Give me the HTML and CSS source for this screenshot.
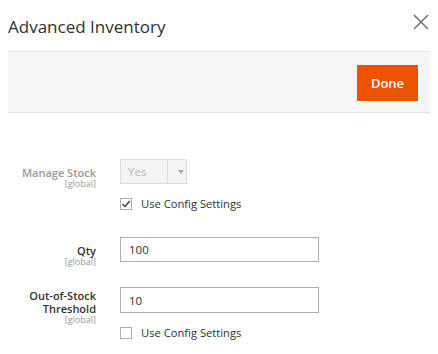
FILE: index.html
```html
<!DOCTYPE html>
<html>
<head>
  <meta charset="UTF-8">
  <title>Advanced Inventory</title>
  <link rel="stylesheet" href="styles.css">
</head>
<body>

  <div class="modal">
    <header class="modal-header">
      <h1 class="modal-title">Advanced Inventory</h1>
      <button class="close" type="button" aria-label="Close">
        <svg width="16" height="16" viewBox="0 0 16 16">
          <path d="M1 1 L15 15 M15 1 L1 15" stroke="#6f6f6f" stroke-width="1.5" fill="none"/>
        </svg>
      </button>
    </header>

    <div class="page-actions">
      <button class="btn-primary" type="button">Done</button>
    </div>

    <form class="inventory-form">
      <!-- Manage stock -->
      <div class="field disabled">
        <div class="label">
          <span class="label-text">Manage Stock</span>
          <span class="scope">[global]</span>
        </div>
        <div class="control">
          <div class="select">
            <span class="select-value">Yes</span>
            <span class="select-arrow"></span>
          </div>
          <label class="check">
            <span class="box checked">
              <svg width="10" height="10" viewBox="0 0 10 10">
                <path d="M1.5 5 L4 7.5 L8.8 2" stroke="#404040" stroke-width="1.4" fill="none"/>
              </svg>
            </span>
            Use Config Settings
          </label>
        </div>
      </div>

      <!-- Qty -->
      <div class="field">
        <div class="label">
          <span class="label-text">Qty</span>
          <span class="scope">[global]</span>
        </div>
        <div class="control">
          <input class="text-input" type="text" value="100">
        </div>
      </div>

      <!-- Out-of-stock threshold -->
      <div class="field">
        <div class="label two-line">
          <span class="label-text">Out-of-Stock<br>Threshold</span>
          <span class="scope">[global]</span>
        </div>
        <div class="control">
          <input class="text-input tall" type="text" value="10">
          <label class="check">
            <span class="box"></span>
            Use Config Settings
          </label>
        </div>
      </div>
    </form>
  </div>

</body>
</html>
```

FILE: styles.css
```css
body {
  margin: 0;
  font-family: "Open Sans", Arial, sans-serif;
  color: #303030;
  background-color: #fff;
}

.modal {
  padding: 0 8px;
}

.modal-header {
  height: 51px;
  display: flex;
  align-items: center;
  justify-content: space-between;
}

.modal-title {
  margin: 0;
  font-size: 17px;
  font-weight: 400;
  color: #303030;
  padding-top: 2px;
}

.close {
  align-self: flex-start;
  background: none;
  border: none;
  padding: 0;
  margin-right: 1px;
  margin-top: 14px;
  width: 16px;
  height: 16px;
  cursor: pointer;
}

.page-actions {
  background-color: #f6f6f6;
  border-top: 1px solid #e3e3e3;
  border-bottom: 1px solid #e3e3e3;
  height: 60px;
  display: flex;
  align-items: center;
  justify-content: flex-end;
  padding-right: 12px;
}

.btn-primary {
  background-color: #eb5202;
  color: #fff;
  border: none;
  font-family: "Open Sans", Arial, sans-serif;
  font-weight: 600;
  font-size: 13px;
  width: 61px;
  height: 36px;
  padding: 0;
  margin-top: 1px;
  cursor: pointer;
}

.inventory-form {
  padding-top: 46px;
}

.field {
  display: grid;
  grid-template-columns: 88px 1fr;
  column-gap: 24px;
  align-items: start;
  margin-bottom: 25px;
}

.field.disabled {
  margin-bottom: 27px;
}

.label {
  text-align: right;
  padding-top: 7px;
  margin-bottom: -10px;
  display: flex;
  flex-direction: column;
}

.label.two-line {
  padding-top: 2px;
  margin-bottom: -20px;
}

.label-text {
  font-size: 11px;
  font-weight: 600;
  line-height: 13px;
  color: #303030;
}

.disabled .label-text {
  color: #999;
}

.scope {
  font-size: 9px;
  line-height: 10px;
  color: #999;
}

.control {
  display: flex;
  flex-direction: column;
  align-items: flex-start;
}

.select {
  display: flex;
  width: 67px;
  height: 25px;
  box-sizing: border-box;
  border: 1px solid #dcdcdc;
  background-color: #f4f4f4;
}

.select-value {
  width: 39px;
  border-right: 1px solid #dcdcdc;
  font-size: 11.5px;
  line-height: 23px;
  padding-left: 7px;
  color: #b5b5b5;
}

.select-arrow {
  flex: 1;
  position: relative;
}

.select-arrow::after {
  content: "";
  position: absolute;
  left: 10px;
  top: 10px;
  border-left: 3px solid transparent;
  border-right: 3px solid transparent;
  border-top: 4px solid #aaa;
}

.check {
  display: flex;
  align-items: center;
  margin-top: 14px;
  font-size: 11.2px;
  line-height: 12px;
  color: #303030;
}

.box {
  width: 12px;
  height: 12px;
  box-sizing: border-box;
  border: 1px solid #adadad;
  margin-right: 9px;
  display: flex;
  align-items: center;
  justify-content: center;
}

.text-input {
  width: 199px;
  height: 25px;
  box-sizing: border-box;
  border: 1px solid #adadad;
  padding: 0 8px;
  font-family: "Open Sans", Arial, sans-serif;
  font-size: 11.5px;
  color: #303030;
  margin: 0;
}

.text-input.tall {
  height: 26px;
}
```
